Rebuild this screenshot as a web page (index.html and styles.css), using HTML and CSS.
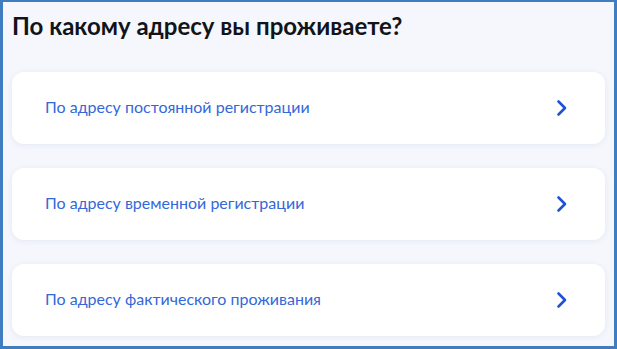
FILE: index.html
```html
<!DOCTYPE html>
<html lang="ru">
<head>
<meta charset="utf-8">
<link rel="stylesheet" href="styles.css">
</head>
<body>
<div class="frame">
  <h1 class="title">По какому адресу вы проживаете?</h1>
  <div class="list">
    <a class="card" href="#"><span class="label">По адресу постоянной регистрации</span><svg class="chev" width="12" height="18" viewBox="0 0 12 18"><path d="M2.5 2.5 L9 9 L2.5 15.5" fill="none" stroke="#1e52d6" stroke-width="2.6" stroke-linecap="round" stroke-linejoin="round"/></svg></a>
    <a class="card" href="#"><span class="label">По адресу временной регистрации</span><svg class="chev" width="12" height="18" viewBox="0 0 12 18"><path d="M2.5 2.5 L9 9 L2.5 15.5" fill="none" stroke="#1e52d6" stroke-width="2.6" stroke-linecap="round" stroke-linejoin="round"/></svg></a>
    <a class="card" href="#"><span class="label">По адресу фактического проживания</span><svg class="chev" width="12" height="18" viewBox="0 0 12 18"><path d="M2.5 2.5 L9 9 L2.5 15.5" fill="none" stroke="#1e52d6" stroke-width="2.6" stroke-linecap="round" stroke-linejoin="round"/></svg></a>
  </div>
</div>
</body>
</html>
```

FILE: styles.css
```css
html, body {
  margin: 0;
  padding: 0;
}
body {
  width: 617px;
  height: 349px;
  overflow: hidden;
  font-family: Lato, "Noto Sans", sans-serif;
}
.frame {
  box-sizing: border-box;
  width: 617px;
  height: 349px;
  border-style: solid;
  border-color: #3f7cc0;
  border-width: 2px 3px 3px 3px;
  background: #f5f7fc;
  padding: 0 9px;
}
.title {
  margin: 9px 0 0 0;
  font-size: 24px;
  line-height: 30px;
  font-weight: 700;
  color: #111418;
  letter-spacing: 0;
}
.list {
  display: flex;
  flex-direction: column;
  gap: 24px;
  margin-top: 31px;
}
.card {
  display: flex;
  align-items: center;
  justify-content: space-between;
  height: 72px;
  box-sizing: border-box;
  padding: 0 37px 0 33px;
  background: #ffffff;
  border-radius: 12px;
  box-shadow: 0 1px 6px rgba(40, 80, 170, 0.09);
  text-decoration: none;
}
.label {
  font-size: 16px;
  color: #3468d8;
  margin-bottom: 3px;
}
.chev {
  display: block;
}
```
